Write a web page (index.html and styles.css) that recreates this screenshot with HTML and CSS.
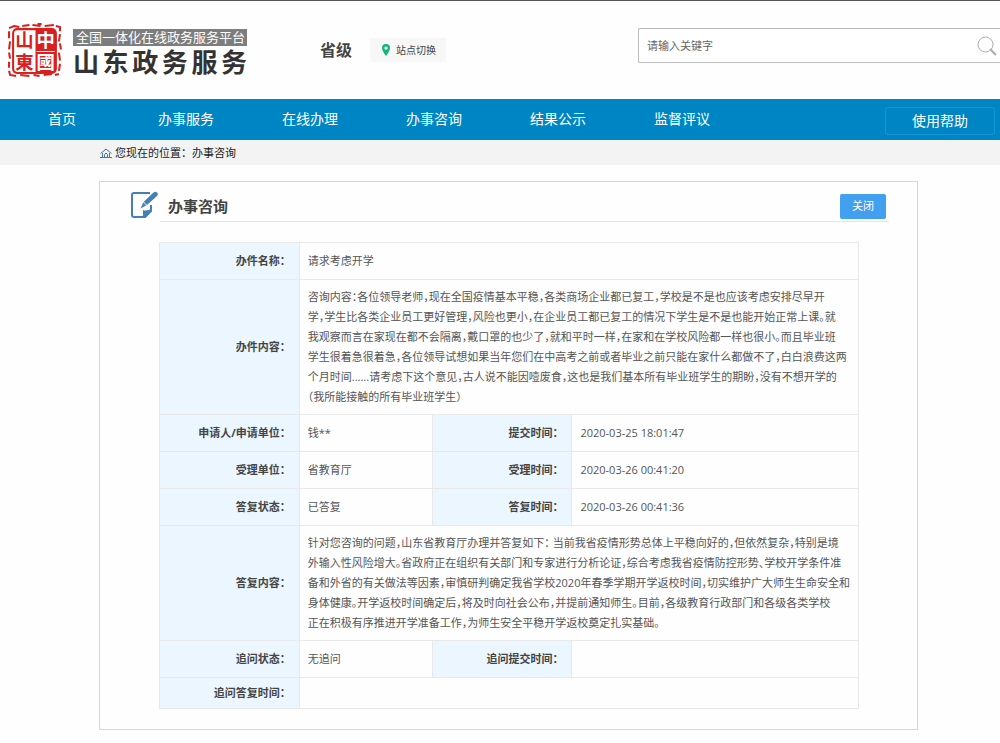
FILE: index.html
```html
<!DOCTYPE html>
<html lang="zh-CN">
<head>
<meta charset="utf-8">
<meta name="viewport" content="width=device-width, initial-scale=1">
<title>山东政务服务 - 办事咨询</title>
<link rel="stylesheet" href="styles.css">
</head>
<body>
<header class="site-header">
  <a class="brand" href="#">
    <svg class="seal" viewBox="0 0 54 54" aria-hidden="true">
      <path class="seal-rough" d="M2 5l5-2 5 1M15 3l7-1M25 2l8 1M30 1h4M37 3l9-1M48 3l4 1v4M2 8v7M3 18l-1 8M2 29l1 6M2 38v6M2 47l1 4 6 1M13 51l9 1M26 51l6 1M36 51l8-1M47 51l4-1M52 11l-1 7M52 20l1 6M51 29l1 8M52 40l-1 7"/>
      <rect class="seal-frame" x="6" y="6" width="42" height="43" rx="4"/>
      <path class="seal-fill" d="M28 6h16q4 0 4 4v35q0 4-4 4H28z"/>
      <path class="seal-line" d="M29 28h18"/>
      <text class="seal-red" x="8" y="24">山</text>
      <text class="seal-red" x="8" y="45">東</text>
      <text class="seal-white" x="29" y="24">中</text>
      <text class="seal-white" x="29" y="45">國</text>
    </svg>
    <span class="brand-text">
      <span class="brand-sub">全国一体化在线政务服务平台</span>
      <span class="brand-name">山东政务服务</span>
    </span>
  </a>
  <div class="region">
    <strong class="region-level">省级</strong>
    <button class="region-switch" type="button">
      <svg class="pin" viewBox="0 0 8 12" aria-hidden="true"><path fill-rule="evenodd" d="M4 0a4 4 0 0 1 4 4c0 3-4 8-4 8S0 7 0 4a4 4 0 0 1 4-4zm0 2.4a1.7 1.7 0 1 0 0 3.4 1.7 1.7 0 0 0 0-3.4z"/></svg>
      站点切换
    </button>
  </div>
  <form class="search">
    <input class="search-input" type="text" placeholder="请输入关键字" aria-label="请输入关键字">
    <button class="search-button" type="button" aria-label="搜索">
      <svg class="search-icon" viewBox="0 0 20 20" aria-hidden="true"><circle cx="8.500" cy="8.500" r="7.500"/><path d="M13 13l6 6" stroke-width="2"/></svg>
    </button>
  </form>
</header>
<nav class="nav">
  <a class="nav-link" href="#">首页</a>
  <a class="nav-link" href="#">办事服务</a>
  <a class="nav-link" href="#">在线办理</a>
  <a class="nav-link" href="#">办事咨询</a>
  <a class="nav-link" href="#">结果公示</a>
  <a class="nav-link" href="#">监督评议</a>
  <a class="nav-help" href="#">使用帮助</a>
</nav>
<div class="crumbs">
  <svg class="home" viewBox="0 0 12 10" aria-hidden="true"><path d="M.5 5.500L6 1l5.500 4.500M2.500 5v4M9.500 5v4M0 9.500h12M4.500 9V6.500L6 5l1.500 1.500V9"/></svg>
  <span>您现在的位置：办事咨询</span>
</div>
<main class="card">
  <div class="card-head">
    <svg class="edit" viewBox="0 0 28 28" aria-hidden="true">
      <path class="edit-line" d="M20 2H4Q2 2 2 4v20q0 2 2 2h10M21 14v4"/>
      <path class="edit-solid" d="M22 17.500v3L15.500 27H13v-8q4 1.500 9-1.500z"/>
      <path class="edit-solid" d="M10.500 17.500l3-6.500L23.500 1.500q2-1.500 3.500 0t0 3.500L17 14z"/>
      <path class="edit-cut" d="M13.500 11l3.500 3.500"/>
    </svg>
    <div class="card-bar">
      <h1 class="card-title">办事咨询</h1>
      <button class="close" type="button">关闭</button>
    </div>
  </div>
  <table class="detail">
    <colgroup><col class="col-a"><col class="col-b"><col class="col-c"><col class="col-d"></colgroup>
    <tr><th scope="row">办件名称：</th><td colspan="3">请求考虑开学</td></tr>
    <tr><th scope="row">办件内容：</th><td class="prose" colspan="3">咨询内容：各位领导老师，现在全国疫情基本平稳，各类商场企业都已复工，学校是不是也应该考虑安排尽早开<br>学，学生比各类企业员工更好管理，风险也更小，在企业员工都已复工的情况下学生是不是也能开始正常上课。就<br>我观察而言在家现在都不会隔离，戴口罩的也少了，就和平时一样，在家和在学校风险都一样也很小。而且毕业班<br>学生很着急很着急，各位领导试想如果当年您们在中高考之前或者毕业之前只能在家什么都做不了，白白浪费这两<br>个月时间......请考虑下这个意见，古人说不能因噎废食，这也是我们基本所有毕业班学生的期盼，没有不想开学的<br>（我所能接触的所有毕业班学生）</td></tr>
    <tr><th scope="row">申请人/申请单位：</th><td>钱**</td><th scope="row">提交时间：</th><td>2020-03-25 18:01:47</td></tr>
    <tr><th scope="row">受理单位：</th><td>省教育厅</td><th scope="row">受理时间：</th><td>2020-03-26 00:41:20</td></tr>
    <tr><th scope="row">答复状态：</th><td>已答复</td><th scope="row">答复时间：</th><td>2020-03-26 00:41:36</td></tr>
    <tr><th scope="row">答复内容：</th><td class="prose" colspan="3">针对您咨询的问题，山东省教育厅办理并答复如下： 当前我省疫情形势总体上平稳向好的，但依然复杂，特别是境<br>外输入性风险增大。省政府正在组织有关部门和专家进行分析论证，综合考虑我省疫情防控形势、学校开学条件准<br>备和外省的有关做法等因素，审慎研判确定我省学校2020年春季学期开学返校时间，切实维护广大师生生命安全和<br>身体健康。开学返校时间确定后，将及时向社会公布，并提前通知师生。目前，各级教育行政部门和各级各类学校<br>正在积极有序推进开学准备工作，为师生安全平稳开学返校奠定扎实基础。</td></tr>
    <tr><th scope="row">追问状态：</th><td>无追问</td><th scope="row">追问提交时间：</th><td></td></tr>
    <tr class="short"><th scope="row">追问答复时间：</th><td colspan="3"></td></tr>
  </table>
</main>
</body>
</html>
```
FILE: styles.css
```css
* { box-sizing: border-box; }
body {
  margin: 0;
  border-top: 1px solid #555;
  background: #fefefe;
  color: #555;
  font: 11px/20px "Open Sans", "Noto Sans CJK SC", sans-serif;
}
a { color: inherit; text-decoration: none; }
button, input { font: inherit; }

.site-header {
  display: flex;
  align-items: center;
  height: 98px;
  padding-left: 7px;
}
.brand { display: flex; gap: 11px; flex: none; }
.seal { width: 55px; height: 55px; }
.seal-rough { fill: none; stroke: #d9201f; stroke-width: 2; }
.seal-frame { fill: #fff; stroke: #d9201f; stroke-width: 2; }
.seal-fill { fill: #d9201f; }
.seal-line { stroke: #fff; stroke-width: 1; }
.seal-red, .seal-white { font: bold 18px "Noto Sans CJK TC", sans-serif; }
.seal-red { fill: #d9201f; }
.seal-white { fill: #fff; }
.brand-text { display: flex; flex-direction: column; padding-top: 6px; }
.brand-sub {
  height: 17px;
  padding: 0 2px 0 3px;
  background: #7d7d7d;
  color: #fff;
  font-size: 13px;
  line-height: 16px;
}
.brand-name {
  color: #333;
  font-size: 26px;
  font-weight: bold;
  line-height: 32px;
  text-align: justify;
  text-align-last: justify;
}
.region { display: flex; align-items: center; gap: 18px; margin-left: 73px; flex: none; }
.region-level { color: #444; font-size: 16px; }
.region-switch {
  display: flex;
  align-items: center;
  gap: 6px;
  height: 24px;
  padding: 0 10px 0 12px;
  border: 0;
  background: #f7f7f7;
  color: #444;
  font-size: 10px;
}
.pin { width: 8px; height: 12px; fill: #12b57c; }
.search {
  display: flex;
  align-items: center;
  flex: 1;
  height: 35px;
  margin: 0 0 9px 192px;
  border: 1px solid #bbb;
  border-right: 0;
  border-radius: 2px 0 0 2px;
  background: #fff;
}
.search-input {
  flex: 1;
  min-width: 0;
  height: 32px;
  padding: 0 8px;
  border: 0;
  outline: 0;
  background: none;
}
.search-input::placeholder { color: #666; opacity: 1; }
.search-button { display: flex; padding: 0 3px; border: 0; background: none; }
.search-icon { width: 20px; height: 20px; fill: none; stroke: #aaa; }

.nav {
  display: flex;
  align-items: center;
  height: 41px;
  padding-bottom: 2px;
  background: #0085c4;
  color: #fff;
  font-size: 14px;
}
.nav-link { width: 124px; text-align: center; }
.nav-help {
  width: 110px;
  height: 28px;
  margin: 5px 5px 0 auto;
  border: 1px solid #1496dc;
  border-radius: 3px;
  line-height: 26px;
  text-align: center;
}
.crumbs {
  display: flex;
  align-items: center;
  gap: 3px;
  height: 25px;
  padding-left: 100px;
  background: #f3f3f3;
  color: #222;
}
.home { width: 12px; height: 10px; fill: none; stroke: #3e78b2; }

.card {
  margin: 16px 82px 12px 99px;
  padding: 9px 28px 20px 30px;
  border: 1px solid #c0ddf2;
  background: #fefefe;
}
.card-head { display: flex; gap: 2px; }
.edit { width: 28px; height: 28px; flex: none; }
.edit-line { fill: none; stroke: #4680b3; stroke-width: 2; }
.edit-solid { fill: #4680b3; }
.edit-cut { stroke: #fff; stroke-width: 1; }
.card-bar {
  display: flex;
  align-items: center;
  justify-content: space-between;
  flex: 1;
  height: 31px;
  padding: 0 3px 0 8px;
  border-bottom: 1px solid #e6e6e6;
}
.card-title { margin: 0; color: #444; font-size: 15px; font-weight: 600; }
.close {
  width: 46px;
  height: 25px;
  padding: 0;
  border: 0;
  border-radius: 2px;
  background: #439fef;
  color: #fff;
}

.detail {
  width: calc(100% - 59px);
  margin: 20px 0 0 29px;
  border-collapse: collapse;
  table-layout: fixed;
}
.col-a, .col-c { width: 20%; }
.col-b { width: 19%; }
.detail th, .detail td {
  height: 37px;
  padding: 7px 0 7px 8px;
  border: 1px solid #e8e8e8;
  text-align: left;
}
.detail th {
  padding-right: 8px;
  background: #ebf6ff;
  color: #444;
  text-align: right;
}
.detail .prose { white-space: nowrap; font-feature-settings: "halt"; }
.detail .short th, .detail .short td { height: 31px; padding-top: 5px; padding-bottom: 5px; }
```
